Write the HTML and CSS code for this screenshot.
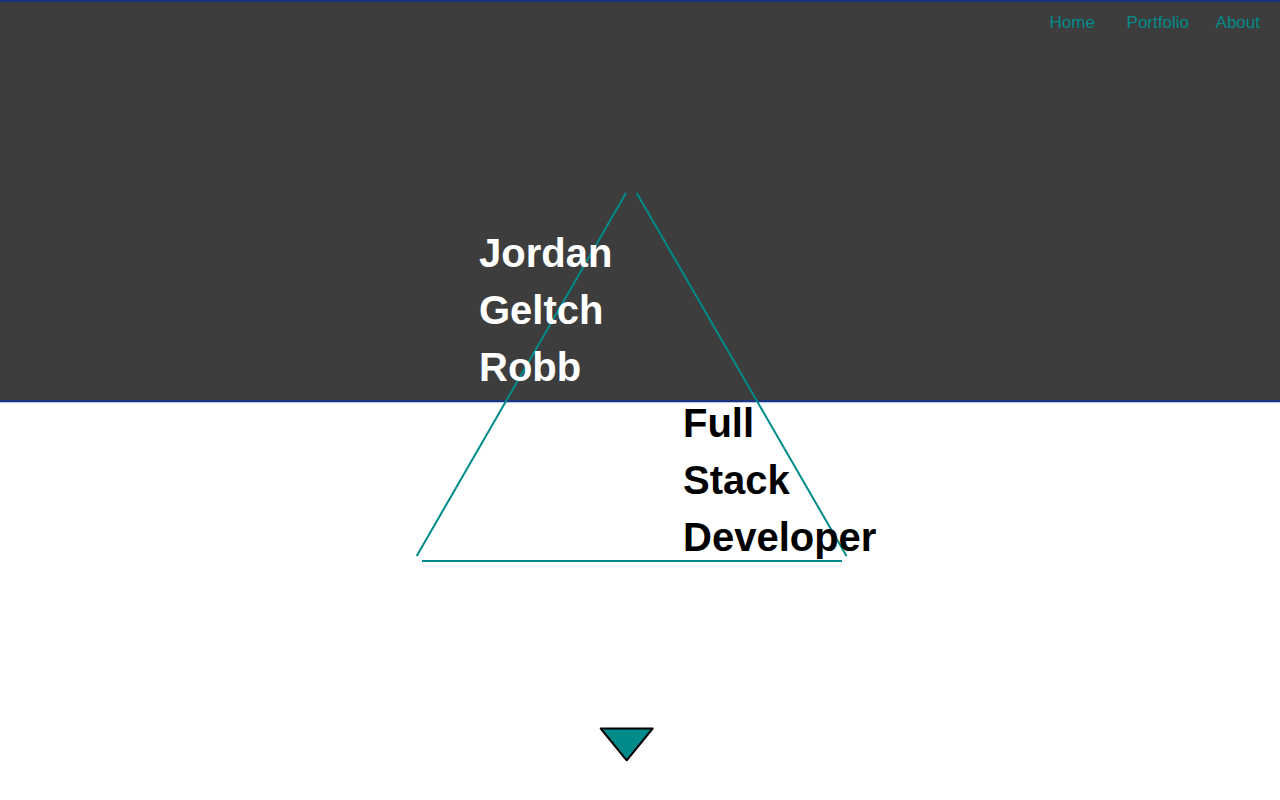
FILE: index.html
```html
<!DOCTYPE html>
<html lang="en">
<head>
  <meta charset="utf-8">
  <meta name="viewport" content="width=device-width, initial-scale=1">
  <title>Jordan Geltch Robb</title>
  <link rel="stylesheet" href="styles.css">
</head>
<body>
  <main class="landing">
    <header class="band">
      <nav>
        <ul class="menu">
          <li><a href="#home">Home</a></li>
          <li><a href="#portfolio">Portfolio</a></li>
          <li><a href="#about">About</a></li>
        </ul>
      </nav>
      <h1 class="words name"><span>Jordan</span> <span>Geltch</span> <span>Robb</span></h1>
    </header>
    <section class="lower">
      <h2 class="words role"><span>Full</span> <span>Stack</span> <span>Developer</span></h2>
      <a class="down" href="#portfolio" aria-label="Scroll down">
        <svg width="56" height="36" viewBox="0 0 56 36" aria-hidden="true">
          <path d="M1.700 2.500H53.700L27.700 34.300Z" fill="#008b8b" stroke="#000" stroke-width="2" stroke-linejoin="round"/>
        </svg>
      </a>
    </section>
    <svg class="triangle" width="432" height="370" viewBox="0 0 432 370" aria-hidden="true">
      <path d="M210 1L.7 364M220.700 1L430.500 364M6 369H426" fill="none" stroke="#008b8b" stroke-width="2"/>
    </svg>
  </main>
</body>
</html>
```
FILE: styles.css
```css
* {
  box-sizing: border-box;
}

body {
  margin: 0;
  background: #fff;
  color: #000;
  font-family: "Liberation Sans", Arial, sans-serif;
}

.landing {
  position: relative;
  display: grid;
  grid-template-rows: calc(50% + 2px) 1fr;
  height: 100vh;
  min-height: 600px;
}

.band {
  display: flex;
  flex-direction: column;
  justify-content: space-between;
  padding: 11px 20px 13px 0;
  background: #3d3d3d;
  border-top: 2px solid #1c337f;
  border-bottom: 2px solid #1c337f;
  box-shadow: 0 1px #bcc5e2;
}

.menu {
  display: grid;
  grid-template-columns: 77px 89px auto;
  justify-content: end;
  margin: 0;
  padding: 0;
  list-style: none;
  font-size: 17px;
  line-height: 20px;
}

.menu a {
  color: #008b8b;
  text-decoration: none;
}

.words {
  z-index: 1;
  display: flex;
  flex-direction: column;
  gap: 17px;
  margin: 0;
  font-size: 40px;
  line-height: 40px;
}

.name {
  padding-left: calc(50% - 151px);
  color: #fff;
}

.role {
  padding-left: calc(50% + 43px);
}

.lower {
  display: flex;
  flex-direction: column;
  justify-content: space-between;
  padding: 1px 0 38px;
}

.down {
  align-self: center;
  margin-right: 26px;
}

.down svg {
  display: block;
}

.triangle {
  position: absolute;
  top: calc(50% - 208px);
  left: calc(50% - 224px);
  overflow: visible;
  pointer-events: none;
}
```
